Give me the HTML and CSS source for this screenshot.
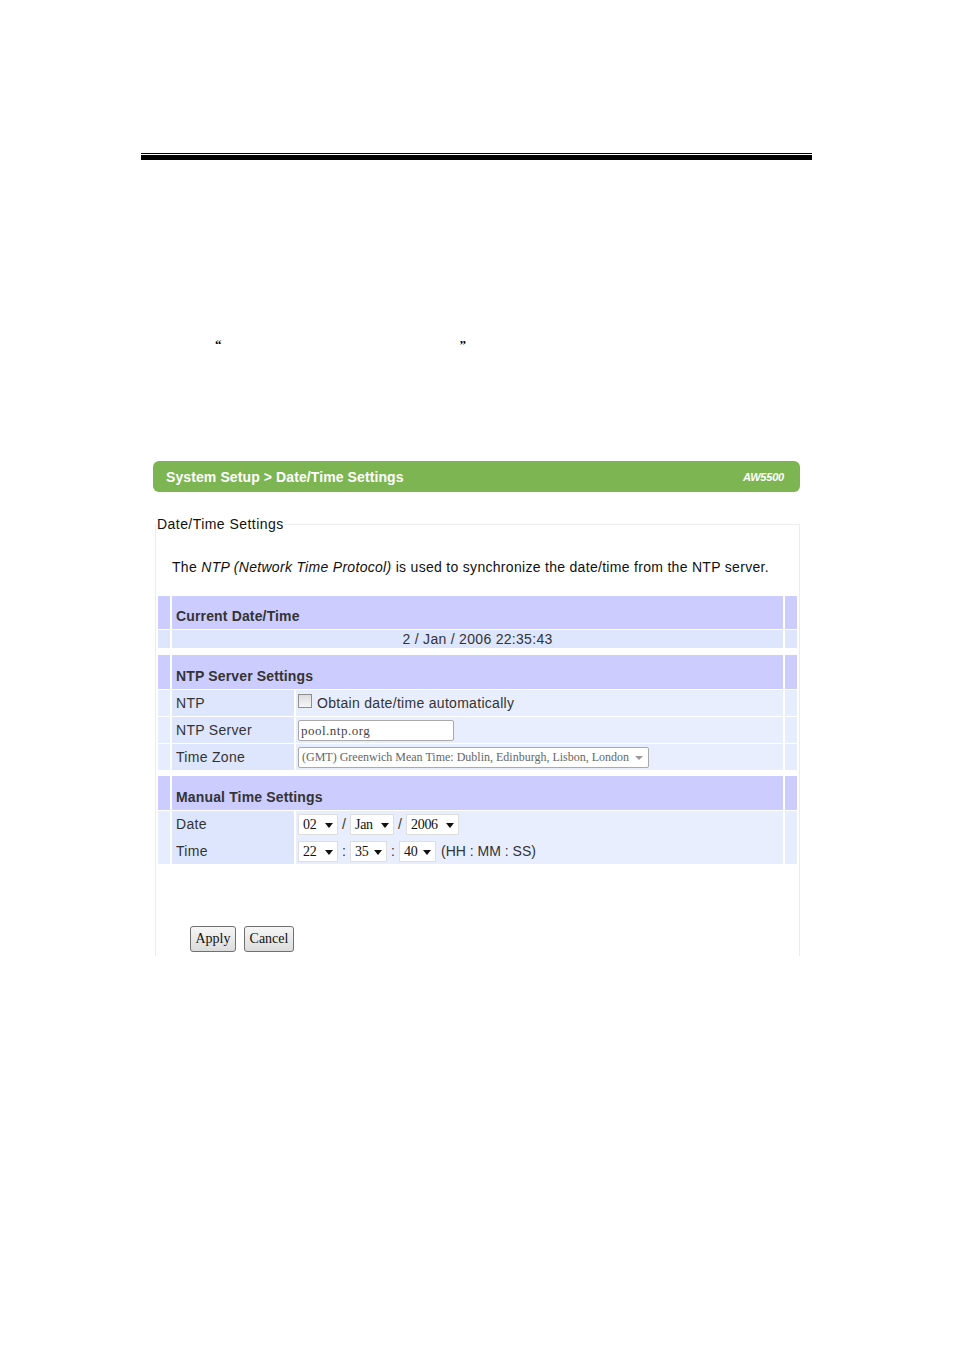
FILE: index.html
```html
<!DOCTYPE html>
<html lang="en">
<head>
<meta charset="utf-8">
<title>Date/Time Settings</title>
<link rel="stylesheet" href="styles.css">
</head>
<body>
<div class="page">
  <div class="rule-thin"></div>
  <div class="rule-thick"></div>

  <div class="quotes"><span>“</span><span class="quote-gap"></span><span>”</span></div>

  <div class="panel">
    <div class="titlebar">
      <span class="title">System Setup &gt; Date/Time Settings</span>
      <span class="model">AW5500</span>
    </div>

    <fieldset class="box">
      <legend>Date/Time Settings</legend>
      <p class="desc">The <i>NTP (Network Time Protocol)</i> is used to synchronize the date/time from the NTP server.</p>

      <div class="grid">
        <div class="sec">
          <div class="row head"><div class="strip"></div><div class="main">Current Date/Time</div><div class="strip"></div></div>
          <div class="row now"><div class="strip"></div><div class="main center">2 / Jan / 2006 22:35:43</div><div class="strip"></div></div>
        </div>

        <div class="sec">
          <div class="row head"><div class="strip"></div><div class="main">NTP Server Settings</div><div class="strip"></div></div>
          <div class="row data">
            <div class="strip"></div>
            <div class="label">NTP</div>
            <div class="value"><span class="check"></span><span class="check-text">Obtain date/time automatically</span></div>
            <div class="strip"></div>
          </div>
          <div class="row data">
            <div class="strip"></div>
            <div class="label">NTP Server</div>
            <div class="value"><span class="textbox">pool.ntp.org</span></div>
            <div class="strip"></div>
          </div>
          <div class="row data">
            <div class="strip"></div>
            <div class="label">Time Zone</div>
            <div class="value"><span class="zone">(GMT) Greenwich Mean Time: Dublin, Edinburgh, Lisbon, London<span class="zone-arrow"></span></span></div>
            <div class="strip"></div>
          </div>
        </div>

        <div class="sec">
          <div class="row head"><div class="strip"></div><div class="main">Manual Time Settings</div><div class="strip"></div></div>
          <div class="row manual">
            <div class="strip"></div>
            <div class="label stack"><span class="line first">Date</span><span class="line">Time</span></div>
            <div class="value stack">
              <span class="line first">
                <span class="sel w40">02</span><span class="sep">/</span><span class="sel w44">Jan</span><span class="sep">/</span><span class="sel w53">2006</span>
              </span>
              <span class="line">
                <span class="sel w40">22</span><span class="sep">:</span><span class="sel w37">35</span><span class="sep">:</span><span class="sel w37">40</span><span class="hint">(HH : MM : SS)</span>
              </span>
            </div>
            <div class="strip"></div>
          </div>
        </div>
      </div>

      <div class="buttons">
        <button class="btn btn-apply" type="button">Apply</button>
        <button class="btn btn-cancel" type="button">Cancel</button>
      </div>
    </fieldset>
  </div>
</div>
</body>
</html>
```

FILE: styles.css
```css
html, body {
  margin: 0;
  padding: 0;
  background: #ffffff;
}

body {
  width: 954px;
  min-height: 1350px;
  font-family: "Liberation Sans", Arial, sans-serif;
  color: #222;
}

.page {
  padding-top: 153px;
}

.rule-thin {
  margin-left: 141px;
  width: 671px;
  height: 1px;
  background: #000;
}

.rule-thick {
  margin-left: 141px;
  margin-top: 1px;
  width: 671px;
  height: 5px;
  background: #000;
}

.quotes {
  margin-top: 178px;
  margin-left: 215px;
  display: flex;
  height: 14px;
  font-family: "Liberation Serif", "Times New Roman", serif;
  font-weight: bold;
  font-size: 13px;
  line-height: 14px;
  color: #000;
}

.quote-gap {
  width: 238px;
}

.panel {
  margin-top: 109px;
  margin-left: 153px;
  width: 647px;
}

.titlebar {
  height: 31px;
  border-radius: 6px;
  background: #7db553;
  display: flex;
  align-items: center;
  justify-content: space-between;
  padding: 0 16px 0 13px;
  color: #fff;
}

.title {
  font-weight: bold;
  font-size: 14px;
  letter-spacing: 0.1px;
}

.model {
  font-weight: bold;
  font-style: italic;
  font-size: 11px;
  letter-spacing: -0.2px;
}

.box {
  margin: 24px 0 0 2px;
  padding: 0 0 4px 0;
  width: 645px;
  box-sizing: border-box;
  border: 1px solid #ececec;
  border-bottom: none;
  min-width: 0;
}

.box legend {
  padding: 0 1px;
  font-size: 14px;
  line-height: 16px;
  letter-spacing: 0.45px;
  color: #111;
}

.desc {
  margin: 27px 0 0 16px;
  font-size: 14px;
  line-height: 16px;
  letter-spacing: 0.3px;
  color: #111;
}

.grid {
  margin: 21px 0 0 2px;
  width: 639px;
  display: flex;
  flex-direction: column;
  gap: 7px;
}

.sec {
  display: flex;
  flex-direction: column;
  gap: 1px;
}

.sec + .sec + .sec {
  margin-top: -1px;
}

.row {
  display: flex;
  gap: 2px;
  font-size: 14px;
  letter-spacing: 0.3px;
  color: #333;
}

.strip {
  width: 12px;
  flex: none;
}

.main {
  flex: 1;
  padding-left: 4px;
}

.head {
  height: 34px;
}

.sec:first-child .head {
  height: 33px;
}

.head .strip,
.head .main {
  background: #ccccff;
}

.head .main {
  display: flex;
  align-items: flex-end;
  padding-bottom: 5px;
  box-sizing: border-box;
  font-weight: bold;
  font-size: 14px;
  letter-spacing: 0.15px;
  color: #333;
}

.now {
  height: 18px;
  line-height: 18px;
}

.now .strip,
.now .main {
  background: #dde6fd;
}

.center {
  text-align: center;
  padding-left: 0;
}

.data {
  height: 26px;
}

.data .strip,
.manual .strip {
  background: #e6edfe;
}

.label {
  width: 122px;
  flex: none;
  background: #dde6fc;
  padding-left: 4px;
  box-sizing: border-box;
  display: flex;
  align-items: center;
}

.value {
  flex: 1;
  background: #e8eefe;
  display: flex;
  align-items: center;
  padding-left: 2px;
}

.check {
  width: 14px;
  height: 14px;
  border: 1px solid #8f8f8f;
  background: linear-gradient(#dcdcdc, #f6f6f6);
  margin: -4px 5px 0 0;
  box-sizing: border-box;
}

.textbox {
  width: 156px;
  height: 21px;
  box-sizing: border-box;
  border: 1px solid #a9a9a9;
  border-radius: 2px;
  background: #fff;
  font-family: "Liberation Serif", "Times New Roman", serif;
  font-size: 13px;
  letter-spacing: 0.5px;
  line-height: 19px;
  padding-left: 2px;
  color: #444;
}

.zone {
  position: relative;
  width: 351px;
  height: 21px;
  box-sizing: border-box;
  border: 1px solid #aaaaaa;
  border-radius: 2px;
  background: #fff;
  font-family: "Liberation Serif", "Times New Roman", serif;
  font-size: 12px;
  letter-spacing: 0;
  line-height: 19px;
  padding-left: 3px;
  color: #666;
  white-space: nowrap;
  overflow: hidden;
}

.zone-arrow {
  position: absolute;
  right: 5px;
  top: 8px;
  width: 0;
  height: 0;
  border-left: 4px solid transparent;
  border-right: 4px solid transparent;
  border-top: 4px solid #999;
}

.manual {
  height: 53px;
}

.stack {
  flex-direction: column;
  align-items: stretch;
}

.line {
  height: 26px;
  display: flex;
  align-items: center;
}

.line.first {
  height: 26px;
  padding-bottom: 1px;
}

.label.stack .line {
  padding-left: 0;
}

.sel {
  position: relative;
  height: 21px;
  box-sizing: border-box;
  border: 1px solid #dedede;
  background: #fff;
  font-family: "Liberation Serif", "Times New Roman", serif;
  font-size: 14px;
  letter-spacing: -0.3px;
  line-height: 19px;
  padding-left: 4px;
  color: #111;
}

.sel::after {
  content: "";
  position: absolute;
  right: 4px;
  top: 8px;
  border-left: 4px solid transparent;
  border-right: 4px solid transparent;
  border-top: 5px solid #111;
}

.w40 { width: 40px; }
.w44 { width: 44px; }
.w53 { width: 53px; }
.w37 { width: 37px; }

.sep {
  width: 12px;
  text-align: center;
  font-size: 14px;
  color: #333;
}

.hint {
  margin-left: 5px;
  font-size: 14px;
  letter-spacing: 0;
  color: #333;
}

.buttons {
  margin: 62px 0 0 34px;
  display: flex;
  gap: 8px;
}

.btn {
  height: 26px;
  padding: 0;
  border: 1px solid #707070;
  border-radius: 3px;
  background: linear-gradient(#f6f6f6, #dcdcdc);
  font-family: "Liberation Serif", "Times New Roman", serif;
  font-size: 14px;
  color: #111;
}

.btn-apply { width: 46px; }
.btn-cancel { width: 50px; }
```
